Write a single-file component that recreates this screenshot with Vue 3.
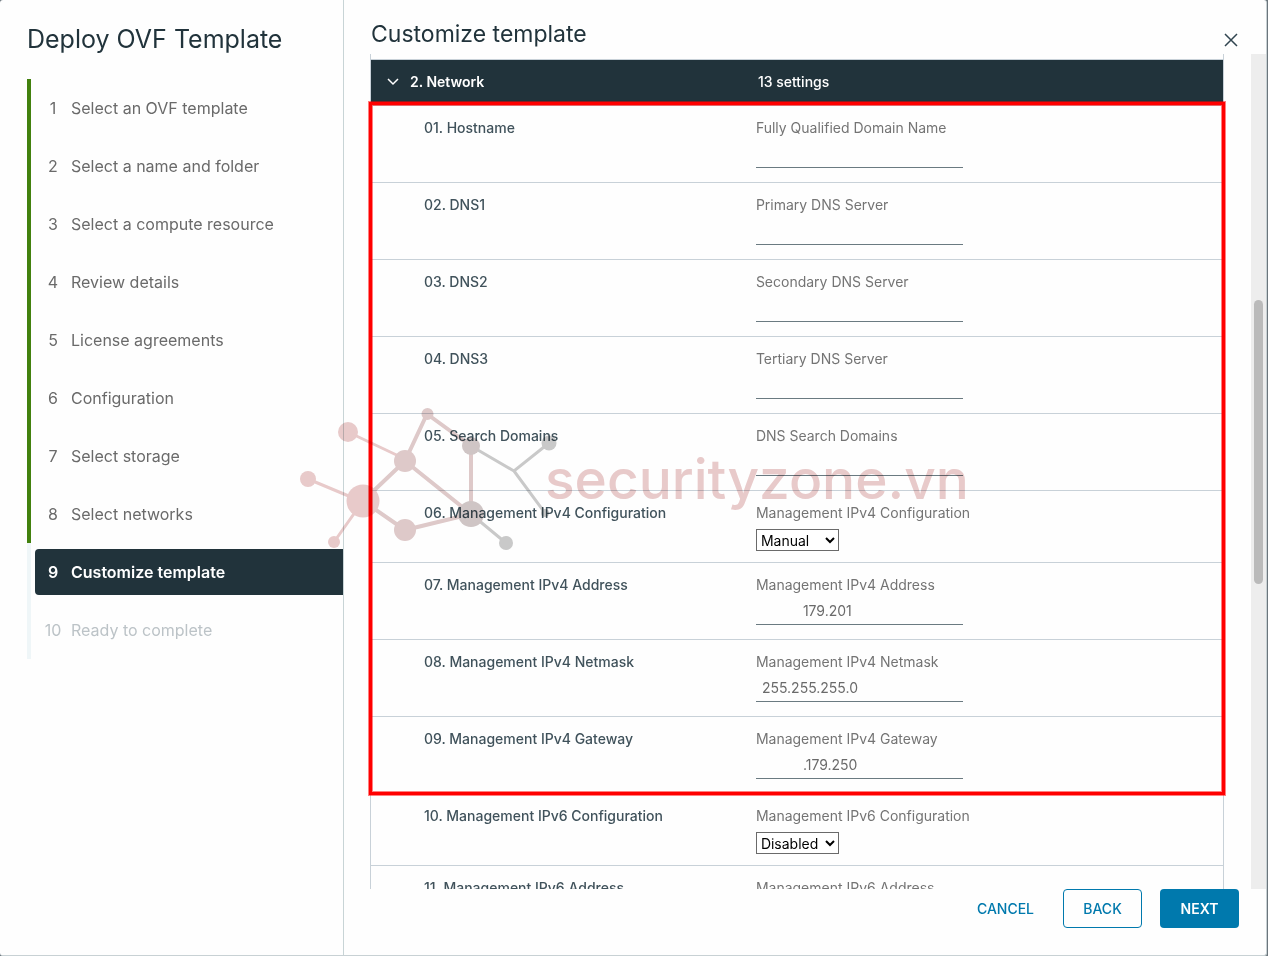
<script setup>
import { reactive } from 'vue'

const steps = [
  'Select an OVF template',
  'Select a name and folder',
  'Select a compute resource',
  'Review details',
  'License agreements',
  'Configuration',
  'Select storage',
  'Select networks',
  'Customize template',
  'Ready to complete',
]
const current = 9

function stateOf(n) {
  if (n < current) return 'done'
  return n === current ? 'active' : 'todo'
}

const groups = reactive([
  {
    marked: true,
    rows: [
      { id: 'hostname', label: '01. Hostname', help: 'Fully Qualified Domain Name', value: '' },
      { id: 'dns1', label: '02. DNS1', help: 'Primary DNS Server', value: '' },
      { id: 'dns2', label: '03. DNS2', help: 'Secondary DNS Server', value: '' },
      { id: 'dns3', label: '04. DNS3', help: 'Tertiary DNS Server', value: '' },
      { id: 'search', label: '05. Search Domains', help: 'DNS Search Domains', value: '' },
      { id: 'v4conf', label: '06. Management IPv4 Configuration', help: 'Management IPv4 Configuration', value: 'Manual', select: true },
      { id: 'v4addr', label: '07. Management IPv4 Address', help: 'Management IPv4 Address', value: '179.201', masked: true },
      { id: 'v4mask', label: '08. Management IPv4 Netmask', help: 'Management IPv4 Netmask', value: '255.255.255.0' },
      { id: 'v4gw', label: '09. Management IPv4 Gateway', help: 'Management IPv4 Gateway', value: '.179.250', masked: true },
    ],
  },
  {
    marked: false,
    rows: [
      { id: 'v6conf', label: '10. Management IPv6 Configuration', help: 'Management IPv6 Configuration', value: 'Disabled', select: true },
      { id: 'v6addr', label: '11. Management IPv6 Address', help: 'Management IPv6 Address', value: '' },
    ],
  },
])
</script>

<template>
  <div class="wizard">
    <nav class="side" aria-label="Steps">
      <h1>Deploy OVF Template</h1>
      <ol>
        <li v-for="(s, i) in steps" :key="s" :class="stateOf(i + 1)">
          <button type="button" :disabled="stateOf(i + 1) === 'todo'">
            <span class="num">{{ i + 1 }}</span>
            <span>{{ s }}</span>
          </button>
        </li>
      </ol>
    </nav>

    <main>
      <header>
        <h2>Customize template</h2>
        <button type="button" class="close" aria-label="Close">
          <svg width="20" height="20" viewBox="0 0 20 20"><path d="M4 4 16 16M16 4 4 16" /></svg>
        </button>
      </header>

      <div class="body">
        <div class="scroll">
          <table>
            <colgroup><col class="c1" /><col /></colgroup>
            <thead>
              <tr>
                <th scope="col">
                  <button type="button" class="toggle" aria-expanded="true">
                    <svg width="12" height="8" viewBox="0 0 12 8"><path d="M1 1 6 6 11 1" /></svg>
                    <span>2. Network</span>
                  </button>
                </th>
                <th scope="col" class="count">13 settings</th>
              </tr>
            </thead>
            <tbody v-for="(g, gi) in groups" :key="gi" :class="{ marked: g.marked }">
              <tr v-for="r in g.rows" :key="r.id">
                <th scope="row"><label :for="r.id">{{ r.label }}</label></th>
                <td>
                  <p>{{ r.help }}</p>
                  <select v-if="r.select" :id="r.id" v-model="r.value">
                    <option>{{ r.value }}</option>
                  </select>
                  <input v-else :id="r.id" v-model="r.value" type="text" :class="{ masked: r.masked }" />
                </td>
              </tr>
            </tbody>
          </table>
        </div>
        <div class="track" aria-hidden="true"><div class="thumb"></div></div>
      </div>

      <footer>
        <button type="button" class="btn flat">CANCEL</button>
        <button type="button" class="btn outline">BACK</button>
        <button type="button" class="btn solid">NEXT</button>
      </footer>
    </main>

    <svg class="watermark" width="680" height="160" viewBox="295 400 680 160" aria-hidden="true">
      <g fill="none" stroke="#e9cbcb" stroke-width="3">
        <path d="M348 432 405 459M308 479 363 502M363 501 334 542" />
      </g>
      <g fill="none" stroke="#dfcaca" stroke-width="4">
        <path d="M363 501 405 461M363 501 405 530 471 514M405 461 427 414 471 446M405 461 471 514M471 446V514" />
      </g>
      <g fill="none" stroke="#cacaca" stroke-width="3">
        <path d="M471 446 514 471 549 443M514 471 545 513M471 514 506 543" />
      </g>
      <g fill="#e9cbcb">
        <circle cx="348" cy="432" r="10" /><circle cx="308" cy="479" r="8" />
        <circle cx="363" cy="501" r="16.500" /><circle cx="334" cy="542" r="6" />
      </g>
      <g fill="#dfcaca">
        <circle cx="405" cy="461" r="11" /><circle cx="405" cy="530" r="11" /><circle cx="427.500" cy="414" r="6" />
      </g>
      <g fill="#d0c6c6">
        <circle cx="471" cy="446" r="9" /><circle cx="471" cy="514" r="13" />
      </g>
      <g fill="#cacaca">
        <circle cx="549" cy="443" r="7.500" /><circle cx="506" cy="543" r="7" /><circle cx="545" cy="513" r="4" />
      </g>
      <text x="545" y="499">securityzone.vn</text>
    </svg>
  </div>
</template>

<style>
body {
  background: #6b757c;
}
</style>

<style scoped>
* {
  box-sizing: border-box;
}
.wizard {
  position: relative;
  display: grid;
  grid-template-columns: 344px minmax(0, 1fr);
  height: 100vh;
  margin-right: 1px;
  background: #fefefe;
  border-right: 1px solid #c8d1d4;
  border-bottom: 1px solid #c8d1d4;
  border-radius: 3px;
  font-family: Inter, "Liberation Sans", sans-serif;
  color: #21333b;
}
h1,
h2,
p,
ol {
  margin: 0;
  padding: 0;
}
h1,
h2 {
  font-size: 25px;
  line-height: 28px;
  font-weight: 400;
}
button {
  font: inherit;
  color: inherit;
  background: none;
  border: 0;
  padding: 0;
}
.side {
  border-right: 1px solid #c8d4d6;
  padding: 25px 0 0 27px;
}
ol {
  list-style: none;
  margin-top: 26px;
}
li {
  height: 58px;
  padding: 6px 0;
  border-left: 4px solid #eff6f8;
  font-size: 16px;
  color: #6a6a6a;
}
li.done {
  border-left-color: #42810e;
}
li button {
  display: flex;
  align-items: center;
  gap: 8px;
  width: calc(100% - 4px);
  height: 46px;
  margin-left: 4px;
  padding-left: 8px;
  text-align: left;
}
li.active button {
  background: #21333b;
  color: #fff;
  font-weight: 600;
  border-radius: 4px 0 0 4px;
}
li.todo {
  color: #bcc3c7;
}
.num {
  width: 20px;
  text-align: center;
}
main {
  display: flex;
  flex-direction: column;
  min-width: 0;
  min-height: 0;
}
header {
  display: flex;
  justify-content: space-between;
  align-items: flex-end;
  height: 54px;
  padding: 0 25px 4px 27px;
}
h2 {
  margin-bottom: 2px;
  font-size: 23px;
}
.close {
  width: 20px;
  height: 20px;
}
.close svg,
.toggle svg {
  display: block;
  fill: none;
  stroke: #314550;
  stroke-width: 1.5;
}
.body {
  flex: 1;
  display: flex;
  gap: 27px;
  min-height: 0;
}
.scroll {
  flex: 1;
  margin-left: 26px;
  border: solid #c8d1d8;
  border-width: 0 1px;
  clip-path: inset(0 -4px);
}
table {
  width: 100%;
  table-layout: fixed;
  border-spacing: 0;
  margin-top: 5px;
  border-top: 1px solid #c8d1d8;
  font-size: 14px;
}
.c1 {
  width: 44%;
}
th,
td {
  padding: 0;
  text-align: left;
  vertical-align: top;
  font-weight: 500;
  border-bottom: 1px solid #c8d1d8;
}
thead th {
  height: 46px;
  padding: 11px 12px 0 16px;
  line-height: 22px;
  background: #21333b;
  color: #fff;
}
thead .count {
  padding-left: 12px;
}
.toggle {
  display: flex;
  align-items: center;
  gap: 11px;
  font-weight: 600;
}
.toggle svg {
  stroke: #fff;
}
tbody th {
  padding: 11px 0 0 53px;
  line-height: 22px;
  color: #40525b;
}
td {
  padding: 11px 0 11px 10px;
  line-height: 22px;
  font-weight: 400;
  color: #747474;
}
input {
  display: block;
  width: 207px;
  height: 29px;
  margin-bottom: 3px;
  padding: 0 6px;
  border: 0;
  border-bottom: 1px solid #6a7a81;
  background: none;
  font: inherit;
  color: #6a6a6a;
  outline: 0;
}
input.masked {
  padding-left: 47px;
}
select {
  display: block;
  width: 83px;
  height: 22px;
  margin-top: 5px;
  border: 1px solid #6a6a6a;
  border-radius: 0;
  background: #fff;
  font: inherit;
  color: #000;
}
.marked {
  position: relative;
}
.marked::after {
  content: "";
  position: absolute;
  inset: -4px -2px -1px;
  border: 3px solid #f00;
  box-shadow: 0 0 0 1px rgba(255, 0, 0, 0.5), inset 0 0 0 1px rgba(255, 0, 0, 0.5);
  pointer-events: none;
}
.track {
  width: 15px;
  padding: 0 3px;
  background: #ededed;
}
.thumb {
  width: 9px;
  height: 34%;
  margin-top: 246px;
  border-radius: 5px;
  background: #bababa;
}
footer {
  position: relative;
  display: flex;
  justify-content: flex-end;
  gap: 18px;
  height: 66px;
  padding: 0 27px 27px 0;
}
.btn {
  min-width: 79px;
  height: 39px;
  border: 1px solid transparent;
  border-radius: 4px;
  font-size: 14px;
  font-weight: 500;
  color: #0079ad;
}
.outline {
  border-color: #0079ad;
}
.solid {
  background: #0079ad;
  color: #fff;
  font-weight: 600;
}
.watermark {
  position: absolute;
  left: 295px;
  top: 400px;
  mix-blend-mode: multiply;
  pointer-events: none;
}
.watermark text {
  font-size: 55px;
  font-weight: 500;
  fill: #e9cbcb;
}
</style>
